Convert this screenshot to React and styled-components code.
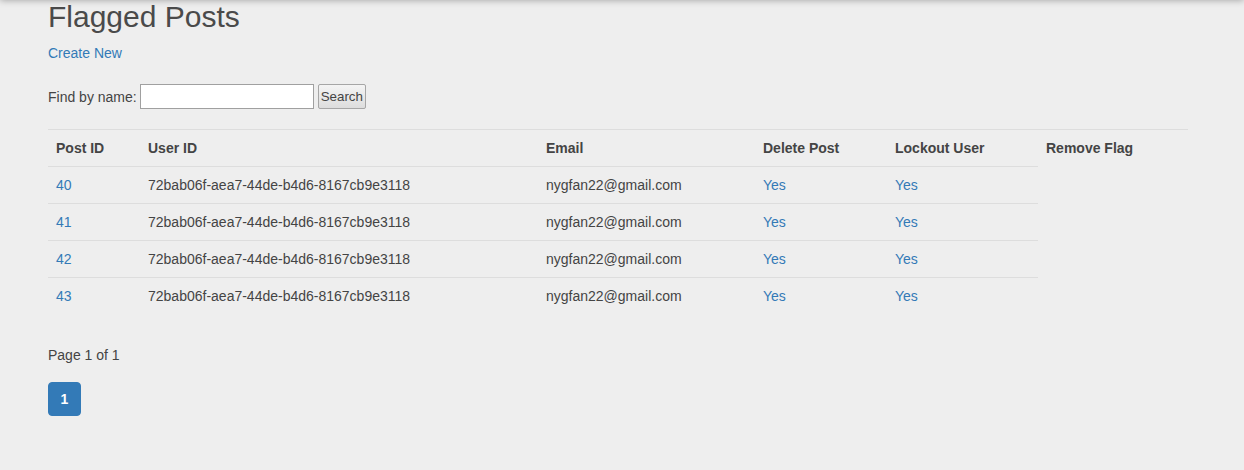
import React from "react";
import styled, { createGlobalStyle } from "styled-components";

const GlobalStyle = createGlobalStyle`
  html, body { margin: 0; padding: 0; }
  body {
    background: #eeeeee;
    color: #444444;
    font-family: "Liberation Sans", Arial, sans-serif;
    font-size: 14px;
    line-height: 1.42857143;
  }
  * { box-sizing: border-box; }
`;

const TopShadow = styled.div`
  position: fixed;
  top: -40px;
  left: 0;
  right: 0;
  height: 40px;
  box-shadow: 0 0 7px rgba(0, 0, 0, 0.35);
  z-index: 10;
`;

const Container = styled.div`
  width: 1188px;
  padding-left: 48px;
`;

const Title = styled.h2`
  margin: 0 0 10px;
  font-size: 30px;
  font-weight: 500;
  line-height: 1.1;
  color: #4a4a4a;
  font-family: "Liberation Sans", Arial, sans-serif;
`;

const Link = styled.a`
  color: #337ab7;
  text-decoration: none;
  cursor: pointer;
`;

const Para = styled.p`
  margin: 0 0 21px;
`;

const SearchForm = styled.form`
  display: flex;
  align-items: center;
  margin: 0 0 20px;
  height: 25px;
`;

const Label = styled.span`
  margin-right: 3px;
`;

const TextInput = styled.input`
  width: 174px;
  height: 25px;
  margin-right: 4px;
  border: 1px solid #a0a0a0;
  background: #fff;
  padding: 1px 2px;
  font-family: "Liberation Sans", Arial, sans-serif;
  font-size: 13.33px;
`;

const Button = styled.button`
  height: 25px;
  width: 48px;
  padding: 0 2px;
  border: 1px solid #a6a6a6;
  border-radius: 2px;
  background: linear-gradient(#f4f4f4, #dddddd);
  color: #444;
  font-family: "Liberation Sans", Arial, sans-serif;
  font-size: 13.33px;
`;

const Table = styled.table`
  width: 1140px;
  border-collapse: collapse;
  border-spacing: 0;
  margin-bottom: 31px;
`;

const Th = styled.th`
  text-align: left;
  font-weight: bold;
  padding: 8px;
  line-height: 20px;
  border-top: 1px solid #dddddd;
  vertical-align: top;
`;

const Td = styled.td`
  padding: 8px;
  line-height: 20px;
  border-top: 1px solid #dddddd;
  vertical-align: top;
`;

const PageInfo = styled.div`
  line-height: 20px;
  margin-bottom: 17px;
`;

const Pagination = styled.ul`
  display: flex;
  list-style: none;
  margin: 0;
  padding: 0;
`;

const PageButton = styled.a`
  display: block;
  width: 33px;
  text-align: center;
  padding: 6px 0;
  line-height: 20px;
  font-weight: bold;
  border: 1px solid ${(p) => (p.$active ? "#337ab7" : "#ddd")};
  border-radius: 4px;
  background: ${(p) => (p.$active ? "#337ab7" : "#fff")};
  color: ${(p) => (p.$active ? "#fff" : "#337ab7")};
  text-decoration: none;
  cursor: pointer;
`;

const columns = [
  { label: "Post ID", width: 92 },
  { label: "User ID", width: 398 },
  { label: "Email", width: 217 },
  { label: "Delete Post", width: 132 },
  { label: "Lockout User", width: 151 },
  { label: "Remove Flag", width: 150 },
];

const rows = [40, 41, 42, 43].map((id) => ({
  id,
  userId: "72bab06f-aea7-44de-b4d6-8167cb9e3118",
  email: "nygfan22@gmail.com",
}));

export default function App() {
  return (
    <>
      <GlobalStyle />
      <TopShadow />
      <Container>
        <Title>Flagged Posts</Title>
        <Para>
          <Link>Create New</Link>
        </Para>
        <SearchForm onSubmit={(e) => e.preventDefault()}>
          <Label>Find by name:</Label>
          <TextInput type="text" />
          <Button type="submit">Search</Button>
        </SearchForm>
        <Table>
          <colgroup>
            {columns.map((c) => (
              <col key={c.label} style={{ width: c.width }} />
            ))}
          </colgroup>
          <tbody>
            <tr>
              {columns.map((c) => (
                <Th key={c.label}>{c.label}</Th>
              ))}
            </tr>
            {rows.map((r) => (
              <tr key={r.id}>
                <Td>
                  <Link>{r.id}</Link>
                </Td>
                <Td>{r.userId}</Td>
                <Td>{r.email}</Td>
                <Td>
                  <Link>Yes</Link>
                </Td>
                <Td>
                  <Link>Yes</Link>
                </Td>
              </tr>
            ))}
          </tbody>
        </Table>
        <PageInfo>Page 1 of 1</PageInfo>
        <Pagination>
          <li>
            <PageButton $active>1</PageButton>
          </li>
        </Pagination>
      </Container>
    </>
  );
}
